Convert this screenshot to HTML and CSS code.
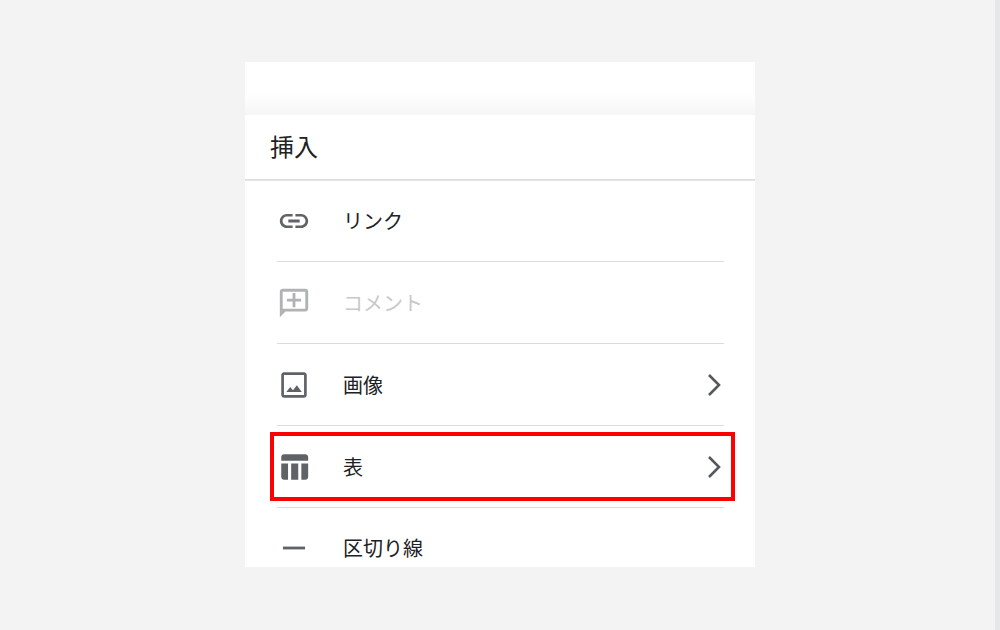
FILE: index.html
```html
<!DOCTYPE html>
<html lang="ja">
<head>
<meta charset="utf-8">
<meta name="viewport" content="width=device-width, initial-scale=1">
<title>挿入</title>
<link rel="stylesheet" href="styles.css">
</head>
<body>
<main class="page">
  <section class="card">
    <div class="backdrop"></div>
    <h1 class="title">挿入</h1>
    <ul class="menu">
      <li class="item">
        <button class="row" type="button">
          <svg class="icon" viewBox="0 0 24 24" aria-hidden="true"><path d="M3.900 12c0-1.710 1.390-3.100 3.100-3.100h4V7H7c-2.760 0-5 2.240-5 5s2.240 5 5 5h4v-1.900H7c-1.710 0-3.100-1.390-3.100-3.100zM8 13h8v-2H8v2zm9-6h-4v1.900h4c1.710 0 3.100 1.390 3.100 3.100s-1.390 3.100-3.100 3.100h-4V17h4c2.760 0 5-2.240 5-5s-2.240-5-5-5z"/></svg>
          <span class="label">リンク</span>
        </button>
      </li>
      <li class="item">
        <button class="row" type="button" disabled>
          <svg class="icon" viewBox="0 0 24 24" aria-hidden="true"><path d="M20 2H4c-1.100 0-2 .9-2 2v18l4-4h14c1.100 0 2-.9 2-2V4c0-1.100-.9-2-2-2zm0 14H4V4h16v12zM11 15h2v-4h4V9h-4V5h-2v4H7v2h4z"/></svg>
          <span class="label">コメント</span>
        </button>
      </li>
      <li class="item">
        <button class="row" type="button">
          <svg class="icon" viewBox="0 0 24 24" aria-hidden="true"><path d="M19 4.900c.1 0 .1 0 .1.100v14c0 .1 0 .1-.1.100H5c-.1 0-.1 0-.1-.1V5c0-.1 0-.1.100-.1h14M19 3H5c-1.100 0-2 .9-2 2v14c0 1.100.9 2 2 2h14c1.100 0 2-.9 2-2V5c0-1.100-.9-2-2-2zM6.600 17l2.700-3.600 2 2.300 2.700-3.600 3.500 4.900z"/></svg>
          <span class="label">画像</span>
          <svg class="chevron" viewBox="0 0 16 24" aria-hidden="true"><path d="M1 2l10 10L1 22"/></svg>
        </button>
      </li>
      <li class="item highlighted">
        <button class="row" type="button">
          <svg class="icon" viewBox="0 0 24 24" aria-hidden="true"><path d="M5 3h15c1.100 0 2 .9 2 2v2.500H3V5c0-1.100.9-2 2-2zM3 9.600h4.800V21H5c-1.100 0-2-.9-2-2zM10 9.600h5V21h-5zM17.200 9.600H22V19c0 1.100-.9 2-2 2h-2.800z"/></svg>
          <span class="label">表</span>
          <svg class="chevron" viewBox="0 0 16 24" aria-hidden="true"><path d="M1 2l10 10L1 22"/></svg>
        </button>
      </li>
      <li class="item">
        <button class="row" type="button">
          <svg class="icon" viewBox="0 0 24 24" aria-hidden="true"><path d="M4.200 11h15.600v2H4.200z"/></svg>
          <span class="label">区切り線</span>
        </button>
      </li>
    </ul>
  </section>
</main>
</body>
</html>
```
FILE: styles.css
```css
* {
  box-sizing: border-box;
}

body {
  margin: 0;
  font-family: "Liberation Sans", "Noto Sans CJK JP", sans-serif;
  color: #202124;
  background: #f3f3f3;
}

.page {
  min-height: 100vh;
  padding: 62px 0 62px 5px;
  border-right: 5px solid #e4e8e8;
}

.card {
  max-width: 510px;
  margin: 0 auto;
  background: #fff;
}

.backdrop {
  height: 53px;
  background: linear-gradient(#fff 60%, #f5f5f5);
}

.title {
  margin: 0;
  padding: 15px 25px 13px;
  font-size: 24px;
  font-weight: 400;
  line-height: 36px;
  background: #fff;
  border-bottom: 1px solid #dcdfe0;
  box-shadow: 0 1px #e2e4e5;
}

.menu {
  margin: 0;
  padding: 0 31px 0 32px;
  list-style: none;
}

.item {
  position: relative;
  border-bottom: 1px solid #dadce0;
}

.row {
  display: flex;
  align-items: center;
  gap: 32px;
  width: 100%;
  padding: 24px 0 23px;
  border: 0;
  background: none;
  font: inherit;
  font-size: 20px;
  line-height: 30px;
  color: inherit;
  text-align: left;
}

.row:disabled {
  color: #ccc6c8;
}

.item:last-child {
  border-bottom: 0;
}

.item:last-child .row {
  padding: 23px 0 2px;
}

.label {
  flex: 1;
  padding-top: 2px;
}

.icon {
  flex: none;
  width: 34px;
  height: 34px;
  fill: #5f6368;
}

.row:disabled .icon {
  fill: #b0b2b4;
}

.chevron {
  width: 16px;
  height: 24px;
  fill: none;
  stroke: #55595d;
  stroke-width: 2.600;
}

.highlighted::after {
  content: "";
  position: absolute;
  inset: 6px -11px 6px -7px;
  border: 4px solid #f00;
  pointer-events: none;
}
```
